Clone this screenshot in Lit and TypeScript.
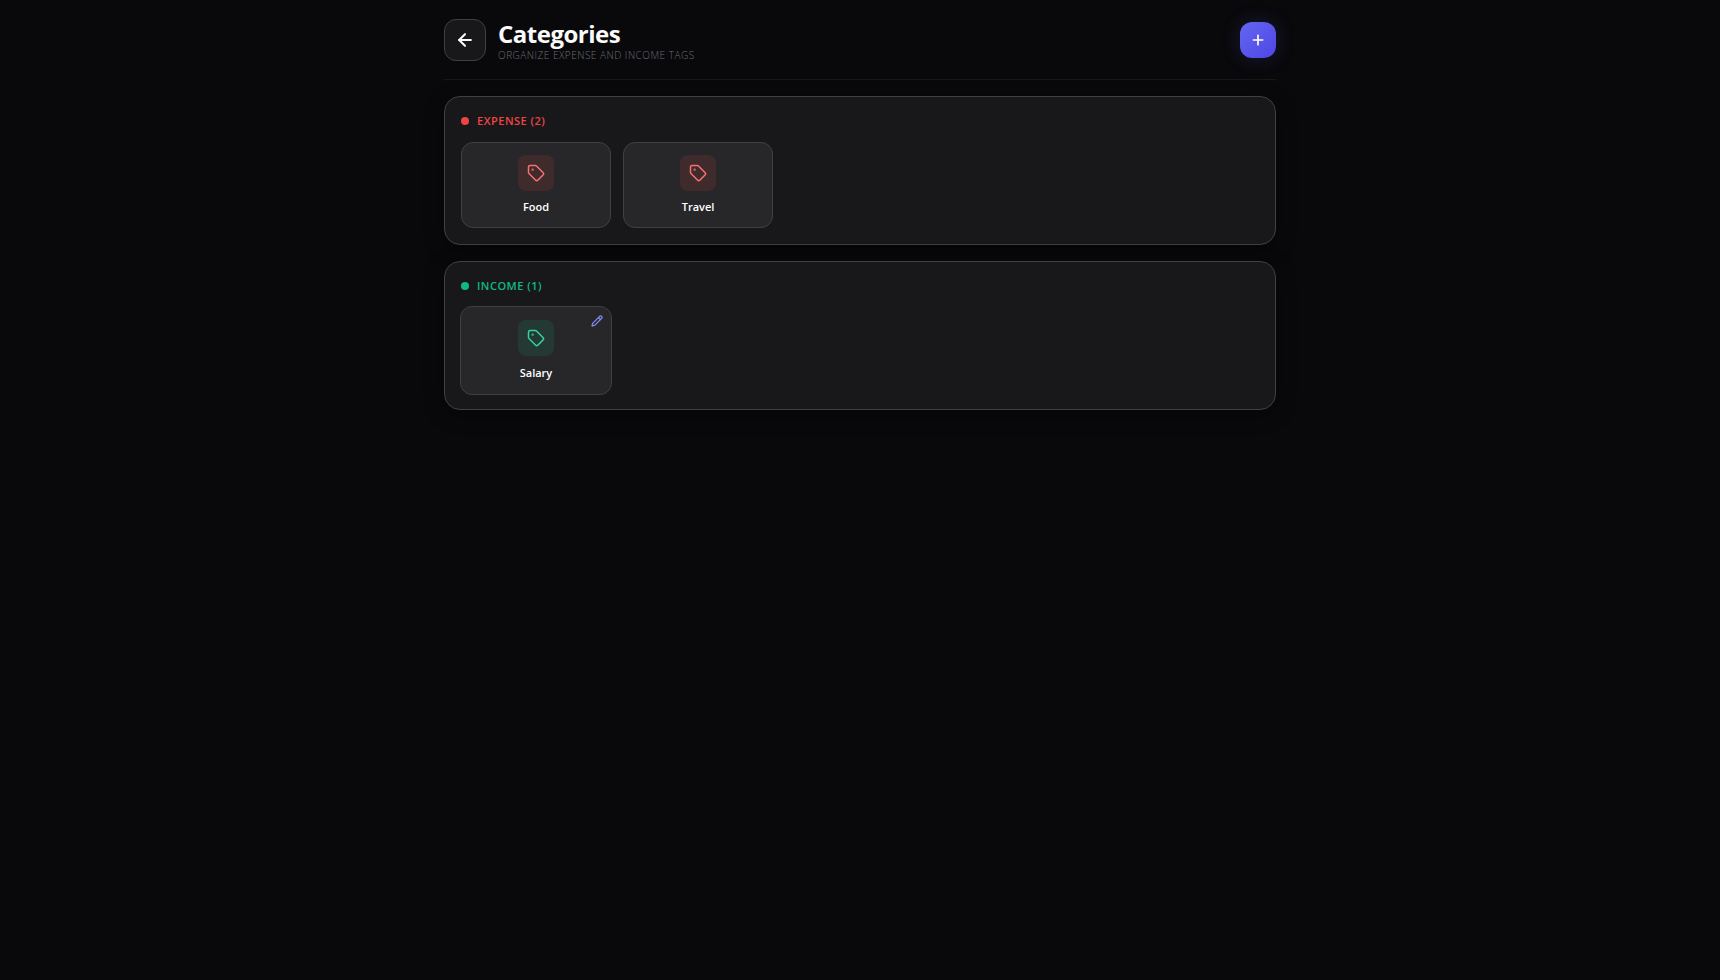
import { LitElement, html, css, svg } from "lit";
import { customElement, property } from "lit/decorators.js";
import { classMap } from "lit/directives/class-map.js";

interface Category {
  name: string;
  active?: boolean;
}

const icon = (size: number, stroke: number, body: unknown) => html`<svg
  width=${size}
  height=${size}
  viewBox="0 0 24 24"
  fill="none"
  stroke="currentColor"
  stroke-width=${stroke}
  stroke-linecap="round"
  stroke-linejoin="round"
  aria-hidden="true"
>${body}</svg>`;

const arrowLeft = svg`<path d="m12 19-7-7 7-7"/><path d="M19 12H5"/>`;
const plus = svg`<path d="M5 12h14"/><path d="M12 5v14"/>`;
const tag = svg`<path d="M12.586 2.586A2 2 0 0 0 11.172 2H4a2 2 0 0 0-2 2v7.172a2 2 0 0 0 .586 1.414l8.704 8.704a2.426 2.426 0 0 0 3.42 0l6.58-6.58a2.426 2.426 0 0 0 0-3.42z"/><circle cx="7.5" cy="7.5" r=".5" fill="currentColor"/>`;
const pencil = svg`<path d="M21.174 6.812a1 1 0 0 0-3.986-3.987L3.842 16.174a2 2 0 0 0-.5.83l-1.321 4.352a.5.5 0 0 0 .623.622l4.353-1.32a2 2 0 0 0 .83-.497z"/><path d="m15 5 4 4"/>`;

@customElement("category-panel")
export class CategoryPanel extends LitElement {
  @property() label = "";
  @property() kind: "expense" | "income" = "expense";
  @property({ attribute: false }) items: Category[] = [];

  static styles = css`
    :host {
      display: block;
      padding: 16px;
      background: #18181b;
      border: 1px solid #3f3f46;
      border-radius: 16px;
      box-shadow: 0 4px 20px rgba(0, 0, 0, 0.4);
    }
    .expense {
      --strong: #ef4444;
      --soft: #f87171;
      --tint: rgba(239, 68, 68, 0.12);
    }
    .income {
      --strong: #10b981;
      --soft: #34d399;
      --tint: rgba(16, 185, 129, 0.12);
    }
    .title {
      display: flex;
      align-items: center;
      gap: 8px;
      margin: 0 0 13px;
      font-size: 11px;
      line-height: 16px;
      font-weight: 600;
      letter-spacing: 0.5px;
      text-transform: uppercase;
      color: var(--strong);
    }
    .dot {
      width: 8px;
      height: 8px;
      border-radius: 50%;
      background: var(--strong);
    }
    .grid {
      display: grid;
      grid-template-columns: repeat(auto-fill, minmax(140px, 1fr));
      gap: 12px;
      margin: 0;
      padding: 0;
      list-style: none;
    }
    .tile {
      position: relative;
      display: flex;
      flex-direction: column;
      align-items: center;
      gap: 8px;
      padding: 12px;
      background: #27272a;
      border: 1px solid #3f3f46;
      border-radius: 12px;
      font-size: 11px;
      line-height: 16px;
      font-weight: 600;
      color: #ffffff;
    }
    .tile.active {
      margin: -1px -1px -2px;
      padding: 13px;
      gap: 9px;
    }
    .badge {
      display: grid;
      place-items: center;
      width: 36px;
      height: 36px;
      border-radius: 8px;
      background: var(--tint);
      color: var(--soft);
    }
    .edit {
      position: absolute;
      top: 8px;
      right: 8px;
      display: grid;
      padding: 0;
      border: 0;
      background: none;
      color: #818cf8;
      cursor: pointer;
    }
    svg {
      display: block;
    }
  `;

  render() {
    return html`<section class=${this.kind}>
      <h2 class="title"><span class="dot"></span>${this.label} (${this.items.length})</h2>
      <ul class="grid">
        ${this.items.map(
          (item) => html`<li class=${classMap({ tile: true, active: !!item.active })}>
            <span class="badge">${icon(18, 2, tag)}</span>
            <span>${item.name}</span>
            ${item.active
              ? html`<button class="edit" aria-label="Edit ${item.name}">${icon(12, 2.5, pencil)}</button>`
              : null}
          </li>`
        )}
      </ul>
    </section>`;
  }
}

@customElement("app-root")
export class AppRoot extends LitElement {
  static styles = css`
    :host {
      display: block;
      min-height: 100vh;
      background: #09090b;
      color: #fafafa;
      font-family: "Open Sans", "Noto Sans", sans-serif;
    }
    .page {
      box-sizing: border-box;
      max-width: 864px;
      margin: 0 auto;
      padding: 0 16px 32px;
    }
    .header {
      display: flex;
      align-items: center;
      gap: 12px;
      margin-bottom: 16px;
      padding: 18px 0;
      border-bottom: 1px solid #18181b;
    }
    .back,
    .add {
      display: grid;
      place-items: center;
      padding: 0;
      border-radius: 12px;
      cursor: pointer;
    }
    .back {
      width: 42px;
      height: 42px;
      border: 1px solid #3f3f46;
      background: #18181b;
      color: #fafafa;
    }
    .add {
      width: 36px;
      height: 36px;
      border: 0;
      background: linear-gradient(135deg, #6366f1, #4f46e5);
      color: #ffffff;
      box-shadow: 0 0 20px rgba(99, 102, 241, 0.2);
    }
    .heading {
      flex: 1;
    }
    .name {
      margin: 0;
      font-size: 24px;
      line-height: 32px;
      font-weight: 700;
      letter-spacing: -0.5px;
    }
    .hint {
      margin: 0;
      font-size: 10px;
      line-height: 11px;
      font-weight: 300;
      letter-spacing: 0.5px;
      text-transform: uppercase;
      color: #6b6b75;
    }
    .panels {
      display: grid;
      gap: 16px;
    }
    svg {
      display: block;
    }
  `;

  private expense: Category[] = [{ name: "Food" }, { name: "Travel" }];
  private income: Category[] = [{ name: "Salary", active: true }];

  render() {
    return html`<div class="page">
      <header class="header">
        <button class="back" aria-label="Back">${icon(20, 2.5, arrowLeft)}</button>
        <div class="heading">
          <h1 class="name">Categories</h1>
          <p class="hint">Organize expense and income tags</p>
        </div>
        <button class="add" aria-label="Add category">${icon(16, 2.5, plus)}</button>
      </header>
      <main class="panels">
        <category-panel label="Expense" kind="expense" .items=${this.expense}></category-panel>
        <category-panel label="Income" kind="income" .items=${this.income}></category-panel>
      </main>
    </div>`;
  }
}
